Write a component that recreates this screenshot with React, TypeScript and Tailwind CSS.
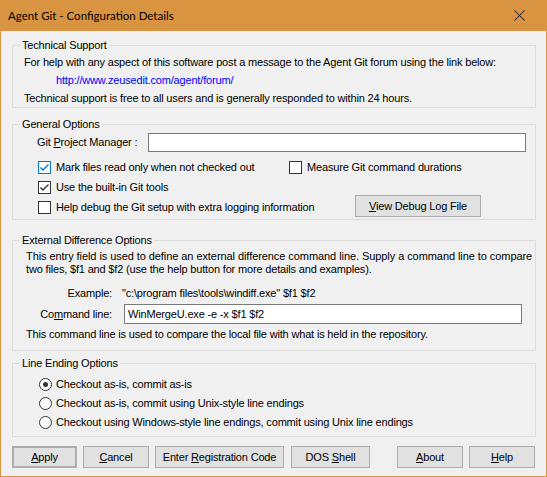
const sans = "font-['Liberation_Sans',Arial,sans-serif]";

function Group({ title, className, children }: { title: string; className?: string; children: React.ReactNode }) {
  return (
    <fieldset className={`ml-[11px] w-[524px] border border-[#dcdcdc] ${className ?? ""}`}>
      <legend className="ml-[7px] px-[2px] leading-[13px]">{title}</legend>
      {children}
    </fieldset>
  );
}

function Check({ checked, focus }: { checked?: boolean; focus?: boolean }) {
  const color = focus ? "#0078d7" : "#333333";
  return (
    <span
      className="flex h-[13px] w-[13px] shrink-0 items-center justify-center border bg-white"
      style={{ borderColor: color }}
    >
      {checked && (
        <svg width="11" height="11" viewBox="0 0 11 11">
          <path d="M1.5 5.5 L4 8 L9.5 2.5" fill="none" stroke={color} strokeWidth="1.4" />
        </svg>
      )}
    </span>
  );
}

function CheckItem({ label, checked, focus }: { label: string; checked?: boolean; focus?: boolean }) {
  return (
    <div className="flex items-center gap-[5px]">
      <Check checked={checked} focus={focus} />
      <span>{label}</span>
    </div>
  );
}

function Radio({ label, selected }: { label: string; selected?: boolean }) {
  return (
    <div className="flex h-[19px] items-center gap-[4px]">
      <span className="flex h-[13px] w-[13px] items-center justify-center rounded-full border border-[#333333] bg-white">
        {selected && <span className="h-[5px] w-[5px] rounded-full bg-[#333333]" />}
      </span>
      <span>{label}</span>
    </div>
  );
}

function Button({ children, className }: { children: React.ReactNode; className?: string }) {
  return (
    <button
      className={`flex h-[22px] items-center justify-center border border-[#adadad] bg-[#e1e1e1] text-black ${className ?? ""}`}
    >
      <span>{children}</span>
    </button>
  );
}

export default function App() {
  return (
    <div className={`flex h-[477px] w-[547px] flex-col bg-[#d99442] text-[11px] tracking-[-0.17px] text-black ${sans}`}>
      <div className="flex h-[31px] items-center justify-between pl-[8px] pr-[22px]">
        <span className="font-['Lato',sans-serif] text-[11.5px] tracking-normal">Agent Git - Configuration Details</span>
        <svg width="11" height="11" viewBox="0 0 11 11">
          <path d="M0.5 0.5 L10.5 10.5 M10.5 0.5 L0.5 10.5" stroke="#000" strokeWidth="1" />
        </svg>
      </div>

      <div className="mx-[1px] mb-[1px] flex-1 bg-[#f0f0f0] pt-[8px] leading-[13px]">
        <Group title="Technical Support">
          <div className="pl-[11px] pt-[1px]">
            <div className="flex h-[18px] items-center">
              For help with any aspect of this software post a message to the Agent Git forum using the link below:
            </div>
            <div className="flex h-[18px] items-center pl-[32px] text-[#0000ff]">http://www.zeusedit.com/agent/forum/</div>
            <div className="flex h-[18px] items-center">
              Technical support is free to all users and is generally responded to within 24 hours.
            </div>
          </div>
        </Group>

        <Group title="General Options" className="mt-[10px] pb-[2px]">
          <div className="mt-[2px] flex h-[19px] items-center pl-[24px]">
            <span className="w-[111px]">
              Git <u>P</u>roject Manager :
            </span>
            <span className="h-[19px] w-[378px] border border-[#7a7a7a] bg-white" />
          </div>
          <div className="mt-[5px] flex h-[20px] items-center pl-[25px]">
            <div className="w-[251px]">
              <CheckItem label="Mark files read only when not checked out" checked focus />
            </div>
            <CheckItem label="Measure Git command durations" />
          </div>
          <div className="flex h-[20px] items-center pl-[25px]">
            <CheckItem label="Use the built-in Git tools" checked />
          </div>
          <div className="-mt-[2px] flex h-[22px] items-start pl-[25px]">
            <div className="w-[317px] pt-[6px]">
              <CheckItem label="Help debug the Git setup with extra logging information" />
            </div>
            <Button className="w-[126px]">
              <u>V</u>iew Debug Log File
            </Button>
          </div>
        </Group>

        <Group title="External Difference Options" className="mt-[14px] pb-[9px]">
          <div className="whitespace-nowrap pl-[13px] pt-[3px]">
            <div className="tracking-[-0.07px]">
              This entry field is used to define an external difference command line. Supply a command line to compare
            </div>
            <div>two files, $f1 and $f2 (use the help button for more details and examples).</div>
          </div>
          <div className="mt-[11px] flex whitespace-nowrap">
            <span className="w-[99px] text-right">Example:</span>
            <span className="pl-[10px]">"c:\program files\tools\windiff.exe" $f1 $f2</span>
          </div>
          <div className="mt-[4px] flex h-[20px] items-center whitespace-nowrap">
            <span className="w-[99px] text-right">
              Co<u>m</u>mand line:
            </span>
            <span className="ml-[12px] flex h-[20px] w-[398px] items-center border border-[#7a7a7a] bg-white pl-[3px]">
              WinMergeU.exe -e -x $f1 $f2
            </span>
          </div>
          <div className="mt-[4px] pl-[13px]">
            This command line is used to compare the local file with what is held in the repository.
          </div>
        </Group>

        <Group title="Line Ending Options" className="mt-[6px] pb-[4px]">
          <div className="pl-[26px] pt-[5px]">
            <Radio label="Checkout as-is, commit as-is" selected />
            <Radio label="Checkout as-is, commit using Unix-style line endings" />
            <Radio label="Checkout using Windows-style line endings, commit using Unix line endings" />
          </div>
        </Group>

        <div className="ml-[11px] mt-[9px] flex">
          <Button className="w-[65px] border-2 border-[#0078d7]">
            <u>A</u>pply
          </Button>
          <Button className="ml-[6px] w-[66px]">
            <u>C</u>ancel
          </Button>
          <Button className="ml-[6px] w-[129px]">
            Enter <u>R</u>egistration Code
          </Button>
          <Button className="ml-[7px] w-[79px]">
            DOS <u>S</u>hell
          </Button>
          <Button className="ml-[27px] w-[66px]">
            <u>A</u>bout
          </Button>
          <Button className="ml-[6px] w-[66px]">
            <u>H</u>elp
          </Button>
        </div>
      </div>
    </div>
  );
}
